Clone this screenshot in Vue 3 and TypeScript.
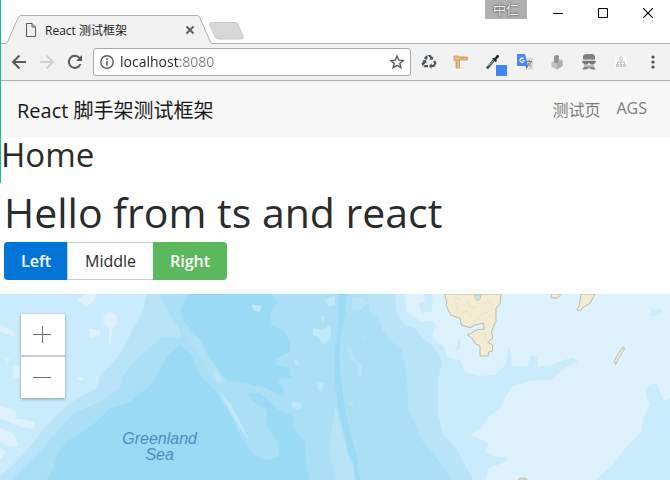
<script setup lang="ts">
import { ref } from 'vue'

const address = ref('localhost:8080')
const selected = ref('')

const links = [
  { label: '测试页', href: '#/test' },
  { label: 'AGS', href: '#/ags' },
]
const choices = [
  { label: 'Left', kind: 'primary' },
  { label: 'Middle', kind: 'plain' },
  { label: 'Right', kind: 'success' },
]
</script>

<template>
  <div class="window">
    <div class="edge" aria-hidden="true"></div>

    <header class="tabstrip">
      <div class="tab">
        <svg class="tab-shape" width="212" height="29" viewBox="0 0 212 29" aria-hidden="true">
          <path d="M0 28.5H5Q7 28.5 8 26L18 3Q19 .5 21 .5H197Q199 .5 200 3L210 26Q211 28.5 212 28.5V29H0Z" fill="#f1f1f1" />
          <path d="M0 28.5H5Q7 28.5 8 26L18 3Q19 .5 21 .5H197Q199 .5 200 3L210 26Q211 28.5 212 28.5" fill="none" stroke="#b0b0b0" />
        </svg>
        <div class="tab-content">
          <svg width="10" height="14" viewBox="0 0 10 14" fill="none" stroke="#5a5a5a" aria-hidden="true">
            <path d="M.5.5H6L9.500 4V13.500H.5ZM6 .5V4H9.500" />
          </svg>
          <span class="tab-title">React 测试框架</span>
          <button class="bare" aria-label="Close tab">
            <svg width="10" height="10" viewBox="0 0 10 10" stroke="#5a5a5a" stroke-width="1.800"><path d="M1.500 1.500L8.500 8.500M8.500 1.500L1.500 8.500" /></svg>
          </button>
        </div>
      </div>
      <button class="bare new-tab" aria-label="New tab">
        <svg width="36" height="18" viewBox="0 0 36 18"><path d="M3 .5H26Q28 .5 29 2L34 14Q35 17 32 17H10Q7 17 6 15L1 3Q0 .5 3 .5Z" fill="#d8d8d8" stroke="#c8c8c8" /></svg>
      </button>
      <div class="window-controls">
        <span class="user">中仁</span>
        <button class="bare" aria-label="Minimize"><svg width="10" height="10" viewBox="0 0 10 10" stroke="#000"><path d="M0 5.500H10" /></svg></button>
        <button class="bare" aria-label="Maximize"><svg width="10" height="10" viewBox="0 0 10 10" fill="none" stroke="#000"><path d="M.5.5H9.500V9.500H.5Z" /></svg></button>
        <button class="bare" aria-label="Close"><svg width="10" height="10" viewBox="0 0 10 10" stroke="#000" stroke-width="1.200"><path d="M0 0L10 10M10 0L0 10" /></svg></button>
      </div>
    </header>

    <div class="toolbar">
      <div class="history">
        <button class="bare" aria-label="Back">
          <svg width="16" height="16" viewBox="0 0 16 16" fill="none" stroke="#5a5a5a" stroke-width="2"><path d="M15 8H2.500M8.500 1.500L2 8L8.500 14.500" /></svg>
        </button>
        <button class="bare" aria-label="Forward">
          <svg width="16" height="16" viewBox="0 0 16 16" fill="none" stroke="#d0d0d0" stroke-width="2"><path d="M1 8H13.500M7.500 1.500L14 8L7.500 14.500" /></svg>
        </button>
        <button class="bare" aria-label="Reload">
          <svg width="16" height="16" viewBox="0 0 16 16" fill="none" stroke="#5a5a5a" stroke-width="2"><path d="M13.500 10A6 6 0 1 1 12.500 4L13.500 5" /><path d="M15 1V7H9Z" fill="#5a5a5a" stroke="none" /></svg>
        </button>
      </div>
      <div class="omnibox">
        <svg width="14" height="14" viewBox="0 0 14 14" fill="none" stroke="#5a5a5a" aria-hidden="true"><circle cx="7" cy="7" r="6.200" stroke-width="1.400" /><path d="M7 6V10.500M7 3.300V5" stroke-width="1.600" /></svg>
        <input v-model="address" aria-label="Address" type="text" spellcheck="false" />
        <button class="bare" aria-label="Bookmark">
          <svg width="16" height="16" viewBox="0 0 16 16" fill="none" stroke="#5a5a5a" stroke-width="1.400"><path d="M8 2L9.800 6.200L14.200 6.600L10.800 9.500L11.900 13.800L8 11.400L4.100 13.800L5.200 9.500L1.800 6.600L6.200 6.200Z" /></svg>
        </button>
      </div>
      <div class="extensions">
        <button class="bare" aria-label="Recycle">
          <svg width="16" height="16" viewBox="0 0 16 16" fill="#4b5560">
            <path d="M5.800 1H9.700L11.200 3.300L12.500 2.600L11.500 6L8 5.300L9.300 4.500L8 2.400Z" />
            <path d="M5 1.500L7 3L5.500 6L3 4.500Z" />
            <path d="M12 7.800L14.300 6.500L15.500 9L13.500 13H10.500V14.800L8 12L10.500 9.300V10.800H12.300L13.300 9.300Z" />
            <path d="M1 6.800L4.800 5.800L5.800 9.500L4.500 8.800L3.500 10.300L1.500 12L.5 9.500L2.200 7.500Z" />
            <path d="M3.800 11H7V13.300H3.500L2.200 12.800Z" />
          </svg>
        </button>
        <button class="bare" aria-label="Ruler">
          <svg width="16" height="16" viewBox="0 0 16 16">
            <path d="M3 5H6.500V14H3Z" fill="#efc48c" stroke="#cf965a" stroke-width=".8" />
            <path d="M1 2H5.500V3H14.500V6H5.500V6.500H1Z" fill="#ecbc80" stroke="#cf965a" stroke-width=".8" />
            <path d="M8 3V4.500M10.500 3V4.500M13 3V4.500M3 9H4.500M3 11.500H4.500" stroke="#aa7542" stroke-width=".7" />
            <path d="M7 14H11" stroke="#ddd" />
          </svg>
        </button>
        <button class="bare picker" aria-label="Colour picker">
          <svg width="16" height="16" viewBox="0 0 16 16">
            <path d="M2 14.500L9 6" stroke="#28543a" stroke-width="2.600" /><path d="M3.500 12L8.500 6.500" stroke="#a9cdb6" stroke-width="1" />
            <path d="M7 4L10.500 8L12 7L11.300 5.500L14 3Q14.500.5 11.800 1L9.800 4Z" fill="#202224" />
          </svg>
          <span class="badge"></span>
        </button>
        <button class="bare" aria-label="Translate">
          <svg width="16" height="16" viewBox="0 0 16 16">
            <path d="M6 4H16V15.500H9Z" fill="#d5d8dc" /><path d="M9.500 7.500H15M12.200 6V7.500M14 8Q13 11 10 12M11 9L14 12.500" stroke="#6c8294" fill="none" />
            <path d="M0 0H8L11 12H1Q0 12 0 11Z" fill="#4a87ee" /><path d="M9 12H11L9 15Z" fill="#2b55b8" />
            <path d="M6.700 4.900A2.100 2.100 0 1 0 7.200 6.500H5.300" fill="none" stroke="#fff" stroke-width="1.200" />
          </svg>
        </button>
        <button class="bare" aria-label="Blocks">
          <svg width="16" height="16" viewBox="0 0 16 16">
            <path d="M2.500 8L8 6L13.500 5.500V11.500L8 15.500L2.500 13Z" fill="#c2c2c2" />
            <path d="M8 10L13.500 6.500V12L8 15.500Z" fill="#adadad" />
            <path d="M5 2Q7.500 0 10 2V8.500Q7.500 10 5 8.500Z" fill="#949494" />
          </svg>
        </button>
        <button class="bare" aria-label="Incognito helper">
          <svg width="16" height="16" viewBox="0 0 16 16">
            <path d="M4 0H12L14 2V5H2V2Z" fill="#828282" /><path d="M2 5H14V6.500H2Z" fill="#b0b0b0" />
            <path d="M1 7H15V8.500H14L13 10.500H9.500L8.500 9H7.500L6.500 10.500H3L2 8.500H1Z" fill="#777" />
            <path d="M3 11H13V12.500H3Z" fill="#c0c0c0" />
            <path d="M1.500 15.500Q2 12.500 5 12.500H11Q14 12.500 14.500 15.500H10.500L8 14L5.500 15.500Z" fill="#888" />
          </svg>
        </button>
        <button class="bare" aria-label="Sitemap">
          <svg width="16" height="16" viewBox="0 0 16 16" fill="none" stroke="#bdbdbd"><rect x="2" y="2" width="12" height="12" rx="2" fill="#fafafa" stroke="none" /><circle cx="8" cy="4.500" r="1.500" /><path d="M8 6V10M4.500 10V8H11.500V10" /><path d="M3.500 10.500H5.500V12.500H3.500ZM7 10.500H9V12.500H7ZM10.500 10.500H12.500V12.500H10.500Z" /></svg>
        </button>
        <button class="bare" aria-label="Menu">
          <svg width="16" height="16" viewBox="0 0 16 16" fill="#505050"><circle cx="8" cy="3" r="1.600" /><circle cx="8" cy="8" r="1.600" /><circle cx="8" cy="13" r="1.600" /></svg>
        </button>
      </div>
    </div>

    <nav class="navbar">
      <a class="brand" href="#/">React 脚手架测试框架</a>
      <div class="nav-links">
        <a v-for="link in links" :key="link.href" :href="link.href">{{ link.label }}</a>
      </div>
    </nav>

    <main>
      <h2>Home</h2>
      <section class="greeting">
        <h1>Hello from ts and react</h1>
        <div class="button-group" role="group" aria-label="Alignment">
          <button
            v-for="choice in choices"
            :key="choice.label"
            :class="['choice', choice.kind]"
            :aria-pressed="selected === choice.label"
            @click="selected = choice.label"
          >{{ choice.label }}</button>
        </div>
      </section>

      <section class="map" aria-label="Map">
        <svg class="map-canvas" viewBox="0 27 2010 558" preserveAspectRatio="xMidYMin slice">
          <path fill="#aadff5" d="M0 27H2010V585H0Z" />
          <path fill="#b9e4f8" d="M0 27H480L510 90L535 125L545 158L485 155L455 185L420 210L370 270L360 310L300 350L220 385L180 430L120 500L60 560L40 585H0Z" />
          <path fill="#caebfc" d="M0 27H440L430 75L395 140L370 190L350 220L300 270L290 310L230 340L180 380L140 420L110 460L60 520L0 575Z" />
          <path fill="#9adaf4" d="M565 27L540 80L545 100L570 130L600 165L640 235L680 285L740 295L800 310L850 340L850 310L830 285L875 280L870 250L825 240L830 220L870 200L870 170L850 135L815 120L810 85L835 50L815 27Z" />
          <path fill="#9adaf4" d="M540 180L500 215L485 245L470 270L465 290L440 310L390 350L330 370L290 410L200 470L170 510L160 550L140 585H930L920 540L915 470L880 430L880 395L830 370L780 325H745L760 350L800 375V420L830 470L838 515L800 525L760 510L720 450L690 385L660 340L650 320L600 270L575 210Z" />
          <path fill="#b9e4f8" d="M545 130L600 160L610 200L640 235L655 260L680 285L660 300L640 285L610 230L575 180Z" opacity=".4" />
          <path fill="#c0e8f8" d="M640 250L665 285L650 290ZM665 330L690 355L720 410L748 462L738 455L705 405L675 350ZM755 60L785 62L780 80L760 75ZM962 95L975 90L970 115ZM940 130L965 135L990 120L995 160L970 178L955 155L938 150ZM885 220L900 240H885ZM950 290L970 295L965 320L952 310ZM875 350L905 355L900 375L875 365ZM975 45L1005 30V60L985 65Z" />
          <path fill="#def2fd" d="M230 45L260 27H288L280 50L260 62ZM310 95L330 80L350 90L350 120L338 130L332 180L326 175L328 130L310 115ZM265 130L300 135L300 150L270 160ZM0 118L35 135L48 155L0 140ZM40 240L62 245V285L40 275ZM0 360L50 380L45 400L105 410V432L60 425L0 400ZM0 430L40 445L55 480L30 485L0 470ZM230 280L250 275L248 290ZM15 220L30 222L25 235ZM0 487L18 500L5 520L0 520Z" />
          <path fill="#9adaf4" d="M1015 27H1040L1036 80L1023 150L1018 210L1023 290L1035 370L1050 440L1070 510L1080 585H1065L1060 535L1045 510L1030 430L1017 380L1005 300V190L1015 120Z" />
          <path fill="#b9e4f8" d="M1005 365L1025 430L1045 515L1060 540L1065 585H1010L990 510L995 440ZM1055 40L1090 35L1105 55L1080 75L1055 70ZM1040 185L1055 190L1070 235L1050 225ZM1072 235L1087 240L1085 275L1073 275ZM1045 350L1058 348V362L1045 360ZM1083 150L1093 155L1088 166Z" />
          <path fill="#b9e4f8" d="M1100 27L1110 85L1135 100L1150 140L1170 165L1205 195L1215 240L1222 300L1225 380L1248 420L1265 465L1310 520L1335 550L1360 585H2010V27Z" />
          <path fill="#caebfc" d="M1185 27L1190 85L1215 120L1245 130L1270 160L1300 185L1328 230L1315 280V390L1330 450L1370 490L1395 540L1420 585H2010V27Z" />
          <path fill="#def2fd" d="M1215 27L1220 80L1265 110L1300 108L1310 125L1300 140V160L1335 190L1340 215L1380 225L1395 260L1435 273L1485 270L1515 240L1525 190L1535 205V243L1580 243L1595 210L1610 215L1615 245L1655 240L1715 217L1735 228L1695 250L1650 285L1590 287L1535 305L1515 340L1500 370L1465 395L1445 430L1410 450L1440 462L1465 475L1455 500L1485 515H1520L1525 528L1465 550L1455 585H1785L1840 540L1855 515L1885 480L1925 440L1930 400L1948 360L1937 330L1945 300L1970 295L1990 345L2010 340V27Z" />
          <path fill="#caebfc" d="M1255 55L1275 50L1272 27H1298L1296 80L1265 82ZM1375 165L1382 160L1378 195L1365 200ZM1950 65L1965 75L1980 70L1988 78L1970 92L1955 95Z" />
          <g fill="#f3ecd3" stroke="#bcbba9" stroke-width="3" stroke-linejoin="round">
            <path d="M1333 27L1340 50L1338 60L1352 90L1380 100L1384 120L1410 128L1425 120L1450 115L1453 132L1432 134L1403 150L1418 162L1426 176L1440 182V213H1465V202L1477 198L1478 180L1463 172L1478 160L1475 140L1483 118L1488 110V70L1500 58L1503 27Z" />
            <path d="M1655 27L1652 38L1672 39L1685 27ZM1743 27L1738 60L1730 75L1742 77L1750 66L1770 55L1785 27ZM1868 187L1874 190L1856 220L1847 238L1843 229L1853 208ZM1555 585L1560 579L1576 580L1582 585Z" />
          </g>
          <path d="M1421 29L1434 33L1443 28L1440 42L1432 47L1427 38Z" fill="#caebfc" stroke="#bcbba9" stroke-width="2" />
          <path d="M1360 45L1375 60L1370 75M1400 50L1410 65L1430 68M1450 55L1468 50L1480 60M1385 85L1400 78L1415 95M1440 90L1455 80L1475 95M1445 145L1458 150L1452 165M1365 35L1380 45M1420 110L1440 98" fill="none" stroke="#e9dfc0" stroke-width="3" />
          <g class="sea-label" text-anchor="middle">
            <text x="479" y="477">Greenland</text>
            <text x="479" y="524">Sea</text>
          </g>
        </svg>
        <div class="zoom">
          <button aria-label="Zoom in"><svg width="20" height="20" viewBox="0 0 20 20" stroke="#6e6e6e"><path d="M0 9.500H18M9.500 1V18" /></svg></button>
          <button aria-label="Zoom out"><svg width="20" height="20" viewBox="0 0 20 20" stroke="#6e6e6e"><path d="M0 9.500H18" /></svg></button>
        </div>
      </section>
    </main>
  </div>
</template>

<style>
body {
  background: #fff;
}
</style>

<style scoped>
* {
  box-sizing: border-box;
}
.window {
  position: relative;
  display: flex;
  flex-direction: column;
  min-height: 100vh;
  color: #292b2c;
  font-family: "Open Sans", "Noto Sans CJK SC", sans-serif;
}
.edge {
  position: absolute;
  top: 0;
  left: 0;
  width: 1px;
  height: 183px;
  background: #1abc9c;
}
button {
  font: inherit;
  cursor: pointer;
}
svg {
  display: block;
  flex: none;
}
.bare {
  display: flex;
  align-items: center;
  justify-content: center;
  padding: 0;
  border: 0;
  background: none;
}
.tabstrip {
  display: flex;
  align-items: flex-end;
  height: 44px;
  border-bottom: 1px solid #b0b0b0;
}
.tab {
  display: grid;
  margin-bottom: -1px;
}
.tab-shape,
.tab-content {
  grid-area: 1 / 1;
}
.tab-content {
  display: flex;
  align-items: center;
  gap: 9px;
  padding: 0 17px 0 26px;
}
.tab-title {
  flex: 1;
  color: #222;
  font-size: 12px;
}
.new-tab {
  align-self: flex-start;
  margin: 22px 0 0 -3px;
}
.window-controls {
  display: flex;
  align-self: flex-start;
  gap: 35px;
  margin-left: auto;
  padding-right: 17px;
}
.window-controls button {
  height: 26px;
}
.user {
  width: 42px;
  height: 19px;
  margin-right: -9px;
  background: #b0b0b0;
  color: #fff;
  font-size: 13px;
  line-height: 18px;
  text-align: center;
  text-shadow: 0 0 2px #333, 0 0 1px #333;
}
.toolbar {
  display: flex;
  align-items: center;
  height: 37px;
  padding: 0 9px 0 11px;
  border-bottom: 1px solid #b0b0b0;
  background: #f1f1f1;
}
.history {
  display: flex;
  gap: 12px;
  margin-right: 10px;
}
.omnibox {
  display: flex;
  flex: 1;
  align-items: center;
  gap: 6px;
  min-width: 0;
  height: 28px;
  padding: 0 5px 0 6px;
  border: 1px solid #a8a8a8;
  border-radius: 3px;
  background: #fff;
}
.omnibox input {
  flex: 1;
  min-width: 0;
  padding: 0;
  border: 0;
  outline: 0;
  background: linear-gradient(to right, #222 60px, #808080 60px);
  background-clip: text;
  color: transparent;
  font: 14px/20px "Open Sans", sans-serif;
}
.extensions {
  display: flex;
  gap: 16px;
  margin-left: 10px;
}
.picker {
  position: relative;
}
.badge {
  position: absolute;
  right: -6px;
  bottom: -6px;
  width: 11px;
  height: 11px;
  background: #4285f4;
}
.navbar {
  display: flex;
  align-items: center;
  justify-content: space-between;
  height: 56px;
  padding: 0 23px 0 17px;
  background: #f7f7f7;
}
.navbar a {
  text-decoration: none;
}
.brand {
  color: #191919;
  font-size: 20px;
}
.nav-links {
  display: flex;
  gap: 16px;
  font-size: 16px;
}
.nav-links a {
  color: #7c7c7c;
}
main {
  display: flex;
  flex: 1;
  flex-direction: column;
}
h1,
h2 {
  margin: 0;
  font-weight: 400;
}
h2 {
  padding-left: 1px;
  font-size: 33px;
  line-height: 36px;
}
.greeting {
  padding: 16px 4px 14px;
}
h1 {
  margin-bottom: 7px;
  font-size: 41px;
  line-height: 46px;
}
.button-group {
  display: flex;
}
.choice {
  height: 38px;
  padding: 0 16px;
  border: 1px solid transparent;
  font-size: 16px;
}
.choice + .choice {
  margin-left: -1px;
}
.primary {
  border-radius: 4px 0 0 4px;
  background: #0275d8;
  color: #fff;
  font-weight: 600;
}
.plain {
  padding: 0 17px;
  border-color: #ccc;
  background: #fff;
  color: #292b2c;
}
.success {
  border-radius: 0 4px 4px 0;
  background: #5cb85c;
  color: #fff;
  font-weight: 600;
}
.map {
  display: grid;
  flex: 1;
  min-height: 186px;
}
.map-canvas,
.zoom {
  grid-area: 1 / 1;
}
.map-canvas {
  width: 100%;
  height: 100%;
}
.sea-label {
  fill: #4f8dbb;
  font: italic 48px "Liberation Sans", sans-serif;
}
.zoom {
  display: grid;
  gap: 2px;
  align-self: start;
  justify-self: start;
  margin: 20px 21px;
  background: #ccc;
  box-shadow: 0 1px 3px rgba(0, 0, 0, 0.35);
}
.zoom button {
  display: grid;
  place-items: center;
  width: 44px;
  height: 41px;
  padding: 0;
  border: 0;
  background: #fff;
}
</style>
